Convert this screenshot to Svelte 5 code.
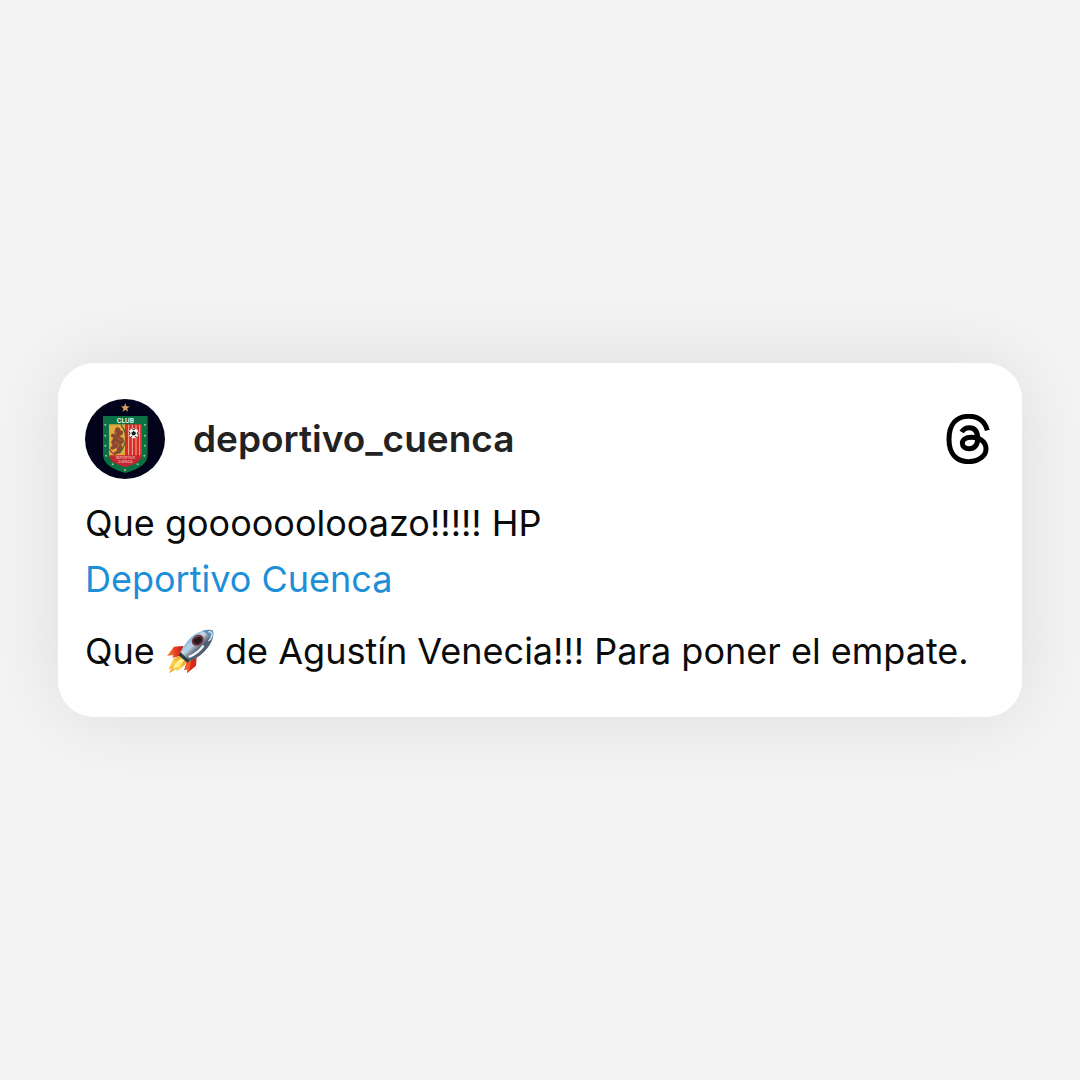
<script>
    const username = 'deportivo_cuenca';

    // small dots along the border of the crest
    const studs = [
        [76, 92], [76, 125], [76, 155], [78, 185], [98, 211],
        [135, 228],
        [173, 211], [193, 185], [195, 155], [195, 125], [195, 92]
    ];
    const stripes = [146, 157, 168, 179];
</script>

<main>
    <article class="card">
        <header>
            <svg class="avatar" viewBox="15 15 240 240" role="img" aria-label="Deportivo Cuenca">
                <circle cx="135" cy="135" r="120" fill="#03041c" />
                <path d="M136 28l3.500 9 9.500.5-7.500 6 2.800 9.500-8.300-5.500-8.300 5.500 2.800-9.500-7.500-6 9.500-.5z" fill="#d9a066" />
                <path d="M69 66H203V180C203 209 181 223 136 237C91 223 69 209 69 180Z" fill="#0b7044" />
                <path d="M87 91H136V188H87Z" fill="#e3ab3d" />
                <path d="M136 91H186V188H136Z" fill="#d92a25" />
                {#each stripes as x}
                    <path d="M{x} 92V186" stroke="#eeb09a" stroke-width="3" />
                {/each}
                <path d="M87 184H186C184 202 164 211 136 220C108 211 89 202 87 184Z" fill="#c32531" />
                <path d="M106 103c6-7 15-3 15 5l9 5-3 9-9 4 12 7 2 12-8 6 4 13-10 14-14 4-3-7 10-5-2-9-12 7-7-5 8-10-5-8 7-13-8-5 3-8 8 1z" fill="#8a4630" />
                <path d="M101 111l8 5-4 8M112 130l11 10M104 144l13 7-4 12" stroke="#b66a3a" stroke-width="3" fill="none" />
                <path d="M122 91c14 17 19 37 12 58-4 12-9 21-16 29" stroke="#3c6a35" stroke-width="4" fill="none" />
                <path d="M87 166c7 3 7 13 19 17" stroke="#b13b2b" stroke-width="4" fill="none" />
                <circle cx="161" cy="118" r="15" fill="#f7f3ed" />
                <path d="M161 111l7 5-3 8h-8l-3-8z" fill="#17151c" />
                <path d="M156 104l5 3 5-3M175 113l-3 5 3 5M169 130l-3-4M153 130l3-4M147 113l3 5-3 5" stroke="#17151c" stroke-width="3" fill="none" />
                {#each studs as [x, y]}
                    <circle cx={x} cy={y} r="3" fill="#a9c58b" />
                {/each}
                <text class="club" x="136" y="86">CLUB</text>
                <text class="ribbon" x="136" y="196">DEPORTIVO</text>
                <text class="ribbon" x="136" y="206">CUENCA</text>
            </svg>
            <h1>{username}</h1>
            <svg class="threads" viewBox="30 27 150 150" role="img" aria-label="Threads">
                <path d="M157 76C149 48 129 34 101 34C63 34 42 60 42 103C42 146 64 170 101 170C132 170 153 152 153 132C153 110 135 97 109 97C92 97 82 104 82 115C82 125 91 131 102 131C119 131 128 120 128 101C128 79 120 68 103 68C92 68 85 72 80 81" />
            </svg>
        </header>

        <p>
            Que goooooolooazo!!!!! HP<br />
            <a href="#deportivo-cuenca">Deportivo Cuenca</a>
        </p>
        <p>
            Que
            <svg class="rocket" viewBox="18 25 150 150" role="img" aria-label="rocket">
                <defs>
                    <linearGradient id="hull" x1="70" y1="48" x2="112" y2="92" gradientUnits="userSpaceOnUse">
                        <stop offset="0" stop-color="#396f9d" />
                        <stop offset=".35" stop-color="#83b7da" />
                        <stop offset=".62" stop-color="#d3dce3" />
                        <stop offset="1" stop-color="#4d6073" />
                    </linearGradient>
                    <linearGradient id="fin" x1="25" y1="95" x2="75" y2="85" gradientUnits="userSpaceOnUse">
                        <stop offset="0" stop-color="#ee8b35" />
                        <stop offset=".5" stop-color="#e83b20" />
                        <stop offset="1" stop-color="#b81a16" />
                    </linearGradient>
                    <linearGradient id="flame" x1="68" y1="108" x2="30" y2="154" gradientUnits="userSpaceOnUse">
                        <stop offset="0" stop-color="#e99b20" />
                        <stop offset=".5" stop-color="#f9d651" />
                        <stop offset="1" stop-color="#f5a02b" />
                    </linearGradient>
                </defs>
                <path d="M73 76L45 78L24 106L43 103L40 112L66 105Z" fill="url(#fin)" />
                <path d="M84 122L113 111L111 135L84 158L86 145L76 148Z" fill="#d8281b" />
                <path d="M84 122L97 119L91 148L84 158L86 145L76 148Z" fill="#f05b28" />
                <path d="M61 105L43 115L29 146L37 143L30 158L51 146L54 151L75 136L87 118Z" fill="url(#flame)" />
                <path d="M65 113L48 130L43 145L62 136L76 119Z" fill="#ffef91" />
                <path d="M62 101C70 79 91 51 113 38C131 28 151 25 161 29C167 43 159 66 145 83C128 104 106 119 85 123Z" fill="url(#hull)" />
                <path d="M129 31C142 26 155 26 161 29C164 37 163 48 157 61C151 46 144 37 129 31Z" fill="#5d8fb9" />
                <path d="M148 34C156 32 159 34 159 42C158 51 154 57 148 61" stroke="#d7e3ec" stroke-width="4" fill="none" />
                <path d="M78 91L105 65" stroke="#a9d3eb" stroke-width="7" stroke-linecap="round" />
                <path d="M92 108C107 102 122 90 132 77" stroke="#f4f4f2" stroke-width="7" stroke-linecap="round" fill="none" />
                <path d="M65 95L91 120L85 126L59 103Z" fill="#223c42" />
                <ellipse cx="116" cy="59" rx="19" ry="15" transform="rotate(-35 116 59)" fill="#702f37" />
                <ellipse cx="116" cy="59" rx="12" ry="10" transform="rotate(-35 116 59)" fill="#241a23" />
                <path d="M108 53c3-5 8-7 13-6" stroke="#a6535a" stroke-width="3" fill="none" />
            </svg>
            de Agustín Venecia!!! Para poner el empate.
        </p>
    </article>
</main>

<style>
:global(body) {
    margin: 0;
    background: #f4f4f4;
}

main {
    display: flex;
    align-items: center;
    min-height: 100vh;
    box-sizing: border-box;
    padding: 0 58px;
    font-family: Inter, "Liberation Sans", sans-serif;
}

.card {
    flex: 1;
    display: flex;
    flex-direction: column;
    gap: 16px;
    padding: 36px 27px 38px;
    border-radius: 36px;
    background: #fff;
    box-shadow: 0 0 80px rgba(0, 0, 0, 0.1);
}

header {
    display: flex;
    align-items: center;
    gap: 28px;
}

.avatar {
    width: 80px;
    height: 80px;
}

.club,
.ribbon {
    fill: #f3f4e8;
    font-weight: 700;
    text-anchor: middle;
}

.club {
    font-size: 19px;
}

.ribbon {
    fill: #eaa29a;
    font-size: 10px;
}

h1 {
    flex: 1;
    margin: 0;
    font-size: 37px;
    font-weight: 600;
    color: #222;
}

.threads {
    width: 50px;
    height: 50px;
}

.threads path {
    fill: none;
    stroke: #000;
    stroke-width: 15;
}

p {
    margin: 0;
    font-size: 36px;
    line-height: 56px;
    color: #0b0b0b;
}

a {
    color: #1c8fd8;
    text-decoration: none;
}

.rocket {
    width: 50px;
    height: 50px;
    vertical-align: middle;
}
</style>
